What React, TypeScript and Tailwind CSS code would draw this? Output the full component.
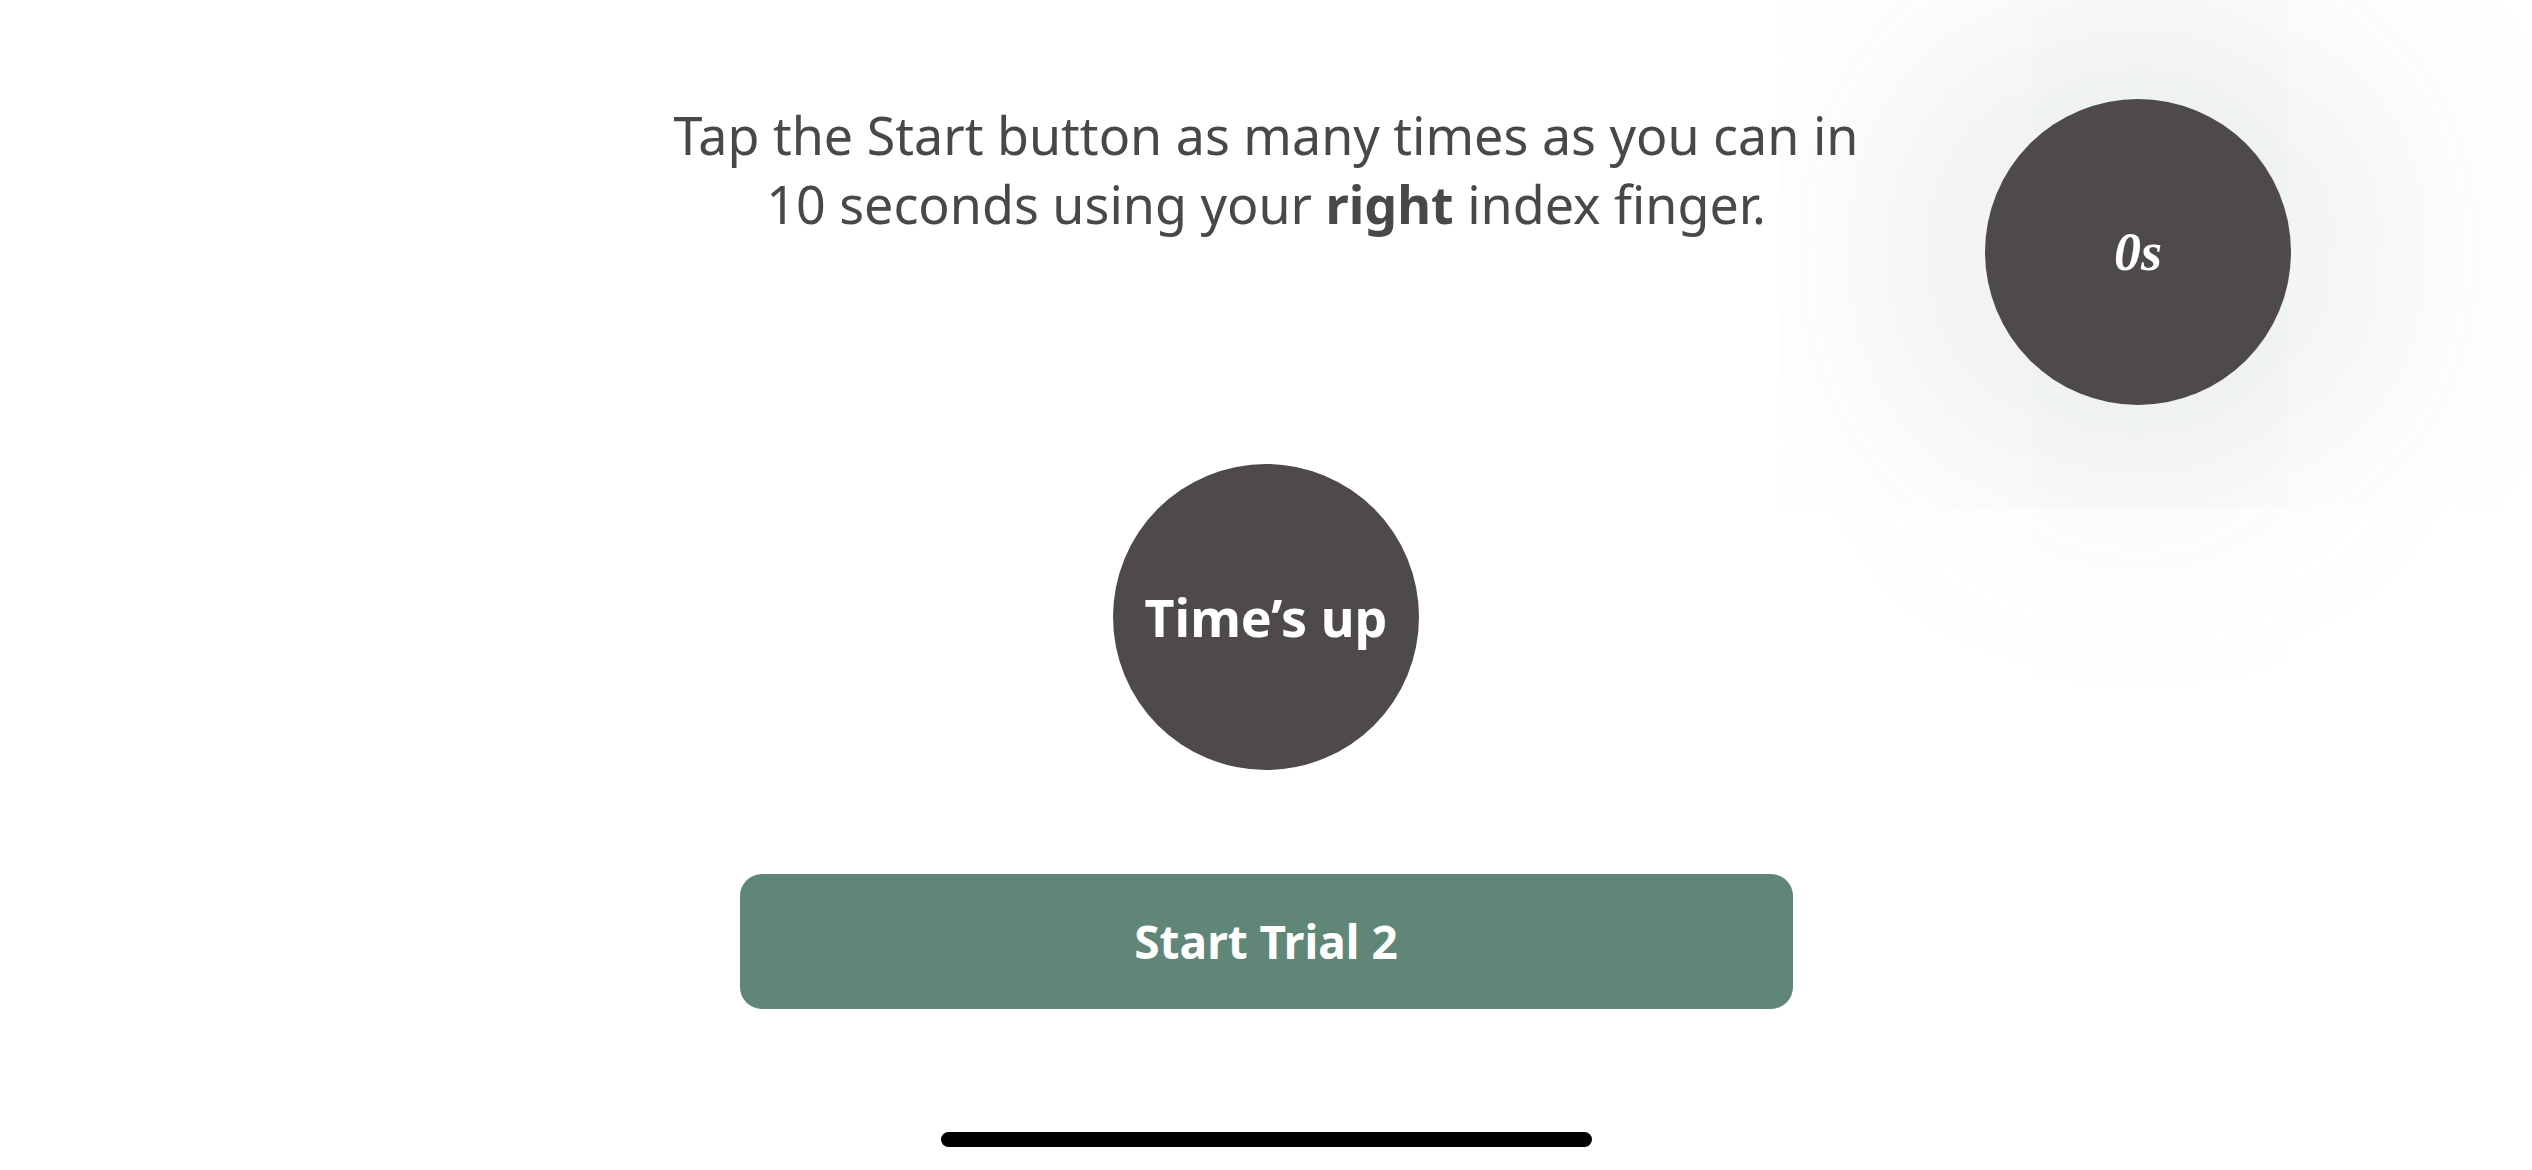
export default function App() {
  return (
    <div className="relative flex h-[1170px] w-[2532px] flex-col items-center overflow-hidden bg-white font-['Noto_Sans',sans-serif]">
      <p className="mt-[100px] text-center text-[52px] leading-[69px] text-[#4a4748]">
        Tap the Start button as many times as you can in
        <br />
        10 seconds using your <span className="font-bold">right</span> index finger.
      </p>

      <div className="absolute left-[1985px] top-[99px] flex h-[306px] w-[306px] items-center justify-center rounded-full bg-[#4e4a4b] shadow-[0_0_240px_70px_rgba(100,135,122,0.18)]">
        <span className="font-['Liberation_Serif',serif] text-[54px] font-bold italic text-white">0s</span>
      </div>

      <div className="mt-[226px] flex h-[306px] w-[306px] items-center justify-center rounded-full bg-[#4e4a4b]">
        <span className="text-[52px] font-bold text-white">Time’s up</span>
      </div>

      <button className="mt-[104px] flex h-[135px] w-[1053px] items-center justify-center rounded-[22px] bg-[#5f8677] text-[46px] font-bold text-white">
        Start Trial 2
      </button>

      <div className="mt-[123px] h-[15px] w-[651px] rounded-full bg-black" />
    </div>
  );
}
